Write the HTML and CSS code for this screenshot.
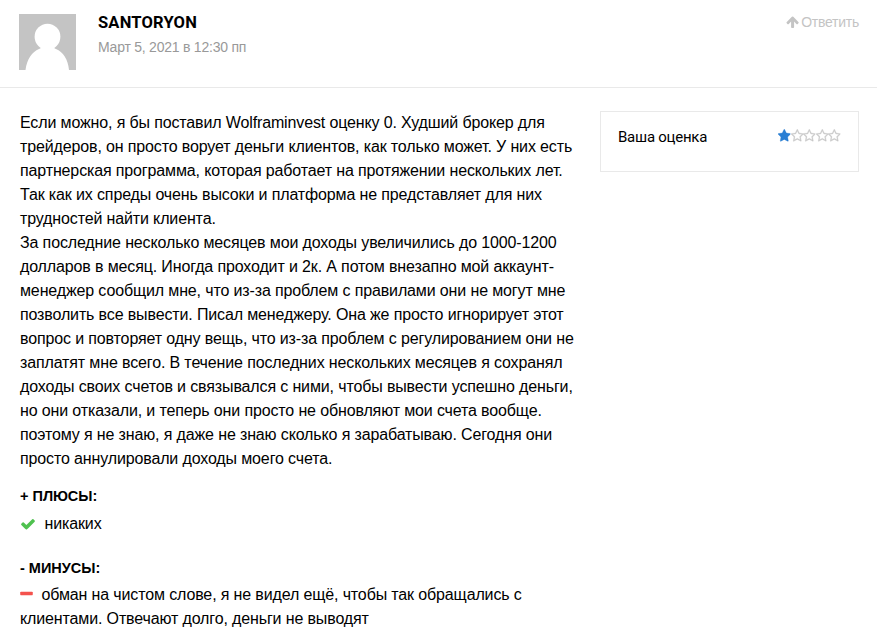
FILE: index.html
```html
<!DOCTYPE html>
<html lang="ru">
<head>
  <meta charset="UTF-8" />
  <meta name="viewport" content="width=device-width, initial-scale=1.0"/>
  <title>Отзывы</title>
  <link rel="stylesheet" href="styles.css">
</head>
<body>

  <svg class="sprite" width="0" height="0">
    <symbol id="star" viewBox="64 0 1664 1792">
      <path d="M1728 647q0 22-26 48l-363 354 86 500q1 7 1 20 0 21-10.5 35.5t-30.5 14.5q-19 0-40-12l-449-236-449 236q-22 12-40 12-21 0-31.5-14.5t-10.5-35.5q0-6 2-20l86-500-364-354q-25-27-25-48 0-37 56-46l502-73 225-455q19-41 49-41t49 41l225 455 502 73q56 9 56 46z"/>
    </symbol>
    <symbol id="star-o" viewBox="64 0 1664 1792">
      <path d="M1201 1004l306-297-422-62-189-382-189 382-422 62 306 297-73 421 378-199 377 199zm527-357q0 22-26 48l-363 354 86 500q1 7 1 20 0 50-41 50-19 0-40-12l-449-236-449 236q-22 12-40 12-21 0-31.5-14.5t-10.5-35.5q0-6 2-20l86-500-364-354q-25-27-25-48 0-37 56-46l502-73 225-455q19-41 49-41t49 41l225 455 502 73q56 9 56 46z"/>
    </symbol>
  </svg>

  <div class="comment">
    <div class="comment-header">
      <svg class="avatar" viewBox="0 0 57 56">
        <rect width="57" height="56" fill="#c4c4c4"/>
        <ellipse cx="28.5" cy="22.8" rx="12.9" ry="13" fill="#fff"/>
        <path d="M6.500 56C8 45 13 38 20 35Q23 34 21.500 32H35.500Q34 34 37 35C44 38 49 45 50 56Z" fill="#fff"/>
      </svg>
      <div class="author">
        <div class="author-name">SANTORYON</div>
        <div class="date">Март 5, 2021 в 12:30 пп</div>
      </div>
      <a class="reply">
        <svg class="icon-arrow" viewBox="53 0 1664 1792"><path d="M1675 971q0 51-37 90l-75 75q-38 38-91 38-54 0-90-38l-294-293v704q0 52-37.500 84.500t-90.500 32.500h-128q-53 0-90.500-32.500t-37.500-84.500v-704l-294 293q-36 38-90 38t-90-38l-75-75q-38-38-38-90 0-53 38-91l651-651q35-37 90-37 54 0 91 37l651 651q37 39 37 91z"/></svg>
        <span>Ответить</span>
      </a>
    </div>

    <div class="comment-body">
      <div class="comment-content">
        <p class="text">
          Если можно, я бы поставил Wolframinvest оценку 0. Худший брокер для<br />
          трейдеров, он просто ворует деньги клиентов, как только может. У них есть<br />
          партнерская программа, которая работает на протяжении нескольких лет.<br />
          Так как их спреды очень высоки и платформа не представляет для них<br />
          трудностей найти клиента.<br />
          За последние несколько месяцев мои доходы увеличились до 1000-1200<br />
          долларов в месяц. Иногда проходит и 2к. А потом внезапно мой аккаунт-<br />
          менеджер сообщил мне, что из-за проблем с правилами они не могут мне<br />
          позволить все вывести. Писал менеджеру. Она же просто игнорирует этот<br />
          вопрос и повторяет одну вещь, что из-за проблем с регулированием они не<br />
          заплатят мне всего. В течение последних нескольких месяцев я сохранял<br />
          доходы своих счетов и связывался с ними, чтобы вывести успешно деньги,<br />
          но они отказали, и теперь они просто не обновляют мои счета вообще.<br />
          поэтому я не знаю, я даже не знаю сколько я зарабатываю. Сегодня они<br />
          просто аннулировали доходы моего счета.
        </p>

        <div class="pros">
          <div class="label">+ ПЛЮСЫ:</div>
          <p><svg class="icon-check" viewBox="0 0 1792 1792"><path d="M1671 566q0 40-28 68l-724 724-136 136q-28 28-68 28t-68-28l-136-136-362-362q-28-28-28-68t28-68l136-136q28-28 68-28t68 28l294 295 656-657q28-28 68-28t68 28l136 136q28 28 28 68z"/></svg>никаких</p>
        </div>

        <div class="cons">
          <div class="label">- МИНУСЫ:</div>
          <p><svg class="icon-minus" viewBox="192 0 1408 1792"><path d="M1600 736v192q0 40-28 68t-68 28h-1216q-40 0-68-28t-28-68v-192q0-40 28-68t68-28h1216q40 0 68 28t28 68z"/></svg>обман на чистом слове, я не видел ещё, чтобы так обращались с<br />
          клиентами. Отвечают долго, деньги не выводят</p>
        </div>
      </div>

      <div class="rating">
        <span class="rating-title">Ваша оценка</span>
        <div class="stars">
          <svg class="star full"><use href="#star"/></svg>
          <svg class="star"><use href="#star-o"/></svg>
          <svg class="star"><use href="#star-o"/></svg>
          <svg class="star"><use href="#star-o"/></svg>
          <svg class="star"><use href="#star-o"/></svg>
        </div>
      </div>
    </div>
  </div>

</body>
</html>
```
FILE: styles.css
```css
* {
  box-sizing: border-box;
}

body {
  margin: 0;
  background: #fff;
  color: #000;
  font-family: "Liberation Sans", Arial, sans-serif;
  font-size: 16px;
  line-height: 24px;
  overflow: hidden;
}

.sprite {
  display: block;
}

.comment-header {
  display: flex;
  height: 88px;
  padding: 14px 18px 0 19px;
  border-bottom: 1px solid #e9e9e9;
}

.avatar {
  width: 57px;
  height: 56px;
  margin-right: 22px;
}

.author {
  flex: 1;
}

.author-name {
  font-family: Roboto, sans-serif;
  font-size: 16.5px;
  font-weight: 700;
  line-height: 18px;
  letter-spacing: 0.2px;
}

.date {
  margin-top: 3px;
  color: #999;
  font-size: 14px;
  letter-spacing: -0.23px;
}

.reply {
  display: flex;
  height: 15px;
  align-items: center;
  color: #c4c4c4;
  font-size: 14px;
  letter-spacing: -0.25px;
}

.icon-arrow {
  width: 13px;
  height: 14px;
  margin-right: 2px;
  fill: #c4c4c4;
}

.comment-body {
  display: flex;
  align-items: flex-start;
  padding: 23px 18px 0 20px;
}

.comment-content {
  width: 580px;
  white-space: nowrap;
}

.comment-content p {
  margin: 0;
  letter-spacing: -0.135px;
}

.label {
  font-size: 14.5px;
  font-weight: 700;
}

.pros {
  margin-top: 13px;
}

.pros p {
  padding-top: 4px;
}

.cons {
  margin-top: 20px;
}

.cons p {
  padding-top: 3px;
}

.icon-check {
  width: 16px;
  height: 16px;
  margin-right: 9px;
  margin-left: -0.5px;
  vertical-align: -3px;
  fill: #4fc14f;
}

.icon-minus {
  width: 13px;
  height: 16px;
  margin-left: -0.5px;
  margin-right: 9px;
  vertical-align: -2px;
  fill: #f4524d;
}

.rating {
  display: flex;
  flex: 1;
  justify-content: space-between;
  height: 61px;
  padding: 13px 17px 0;
  border: 1px solid #e9e9e9;
}

.rating-title {
  font-family: Roboto, sans-serif;
  font-size: 15px;
  letter-spacing: -0.25px;
}

.stars {
  display: flex;
  padding-top: 4px;
}

.star {
  width: 12.6px;
  height: 13.6px;
  fill: #ccc;
  stroke: #ccc;
  stroke-width: 40px;
  overflow: visible;
}

.star.full {
  fill: #2a7fd4;
  stroke: #2a7fd4;
}
```
